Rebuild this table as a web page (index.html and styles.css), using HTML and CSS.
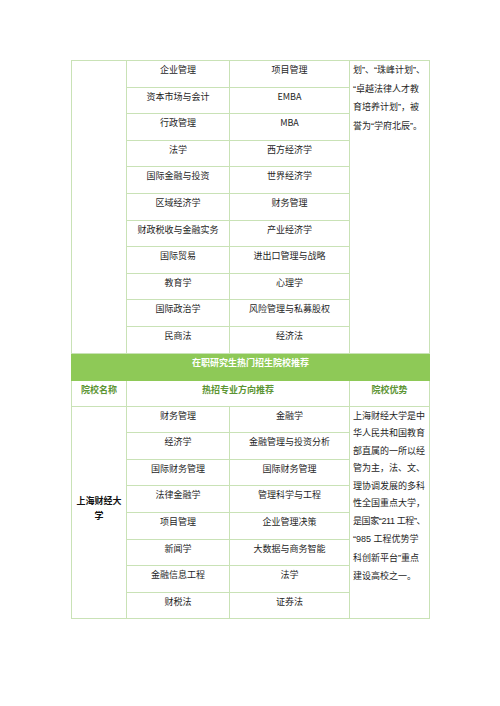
FILE: index.html
```html
<!DOCTYPE html>
<html lang="zh-CN">
<head>
<meta charset="utf-8">
<title>在职研究生热门招生院校推荐</title>
<link rel="stylesheet" href="styles.css">
</head>
<body>
<div class="page">
<table class="grid">
  <colgroup>
    <col class="c1"><col class="c2"><col class="c3"><col class="c4">
  </colgroup>
  <tbody>
    <tr class="row">
      <td class="blank" rowspan="11"></td>
      <td>企业管理</td><td>项目管理</td>
      <td class="adv" rowspan="11"><div class="adv-text">划<span class="q">”</span>、<span class="q">“</span>珠峰计划<span class="q">”</span>、<br><span class="q">“</span>卓越法律人才教<br>育培养计划<span class="q">”</span>，被<br>誉为<span class="q">“</span>学府北辰<span class="q">”</span>。</div></td>
    </tr>
    <tr class="row"><td>资本市场与会计</td><td>EMBA</td></tr>
    <tr class="row"><td>行政管理</td><td>MBA</td></tr>
    <tr class="row"><td>法学</td><td>西方经济学</td></tr>
    <tr class="row"><td>国际金融与投资</td><td>世界经济学</td></tr>
    <tr class="row"><td>区域经济学</td><td>财务管理</td></tr>
    <tr class="row"><td>财政税收与金融实务</td><td>产业经济学</td></tr>
    <tr class="row"><td>国际贸易</td><td>进出口管理与战略</td></tr>
    <tr class="row"><td>教育学</td><td>心理学</td></tr>
    <tr class="row"><td>国际政治学</td><td>风险管理与私募股权</td></tr>
    <tr class="row"><td>民商法</td><td>经济法</td></tr>
    <tr class="band"><td colspan="4">在职研究生热门招生院校推荐</td></tr>
    <tr class="head"><td>院校名称</td><td colspan="2">热招专业方向推荐</td><td>院校优势</td></tr>
    <tr class="row">
      <td class="school" rowspan="8">上海财经大学</td>
      <td>财务管理</td><td>金融学</td>
      <td class="adv" rowspan="8"><div class="adv-text">上海财经大学是中<br>华人民共和国教育<br>部直属的一所以经<br>管为主，法、文、<br>理协调发展的多科<br>性全国重点大学，<br><span class="tight">是国家<span class="q">“211 </span>工程<span class="q">”</span>、</span><br><span class="q">“985 </span>工程优势学<br>科创新平台<span class="q">”</span>重点<br>建设高校之一。</div></td>
    </tr>
    <tr class="row"><td>经济学</td><td>金融管理与投资分析</td></tr>
    <tr class="row"><td>国际财务管理</td><td>国际财务管理</td></tr>
    <tr class="row"><td>法律金融学</td><td>管理科学与工程</td></tr>
    <tr class="row"><td>项目管理</td><td>企业管理决策</td></tr>
    <tr class="row"><td>新闻学</td><td>大数据与商务智能</td></tr>
    <tr class="row"><td>金融信息工程</td><td>法学</td></tr>
    <tr class="row"><td>财税法</td><td>证券法</td></tr>
  </tbody>
</table>
</div>
</body>
</html>
```

FILE: styles.css
```css
html, body {
  margin: 0;
  padding: 0;
  background: #ffffff;
}

body {
  font-family: "Noto Sans CJK SC", "Noto Sans", "Liberation Sans", sans-serif;
  font-size: 9px;
  color: #1e1e1e;
}

.page {
  padding: 60px 0 0 71px;
}

.grid {
  border-collapse: collapse;
  table-layout: fixed;
  width: 358px;
}

.c1 { width: 55px; }
.c2 { width: 103px; }
.c3 { width: 120px; }
.c4 { width: 80px; }

.grid td {
  border: 1px solid #c9e2b6;
  padding: 0;
  text-align: center;
  vertical-align: top;
  line-height: 17.5px;
  white-space: nowrap;
}

.row {
  height: 26.6px;
}

.grid td.adv {
  text-align: left;
  vertical-align: top;
  padding: 0 0 0 3px;
}

.adv-text {
  padding-top: 0;
}

.q {
  font-family: "Liberation Sans", "Noto Sans", sans-serif;
}

.tight {
  letter-spacing: -0.4px;
}

.band {
  height: 27px;
}

.grid .band td {
  background: #8ec957;
  color: #ffffff;
  font-weight: 700;
  border-color: #8ec957;
}

.head {
  height: 26px;
}

.grid .head td {
  color: #5c9433;
  font-weight: 700;
}

.grid td.school {
  vertical-align: middle;
  white-space: normal;
  font-weight: 700;
  color: #111111;
  line-height: 15px;
  padding: 0 4px 8px;
}
```
